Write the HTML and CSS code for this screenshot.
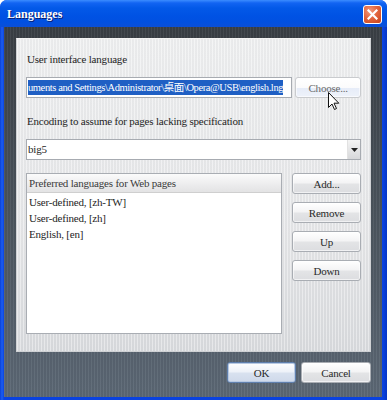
FILE: index.html
```html
<!DOCTYPE html>
<html lang="en">
<head>
    <meta charset="UTF-8">
    <title>Languages</title>
    <link rel="stylesheet" href="styles.css">
</head>
<body>
    <div class="window">
        <div class="titlebar">
            <span class="title">Languages</span>
            <span class="close">
                <svg width="11" height="11" viewBox="0 0 11 11">
                    <path d="M1.5 1.5 L9.5 9.5 M9.5 1.5 L1.5 9.5" stroke="#fff" stroke-width="2.2" stroke-linecap="square"/>
                </svg>
            </span>
        </div>
        <div class="frame">
            <div class="panel">
                <div class="label">User interface language</div>
                <div class="row">
                    <div class="path-input"><span class="selected">uments and Settings\Administrator\桌面\Opera@USB\english.lng</span></div>
                    <button class="btn choose">Choose...</button>
                </div>

                <div class="label second">Encoding to assume for pages lacking specification</div>
                <div class="select">
                    <span class="value">big5</span>
                    <span class="arrow">
                        <svg width="7" height="4" viewBox="0 0 7 4"><path d="M0 0 L7 0 L3.5 4 Z" fill="#222"/></svg>
                    </span>
                </div>

                <div class="list-row">
                    <div class="list">
                        <div class="list-head">Preferred languages for Web pages</div>
                        <div class="item">User-defined, [zh-TW]</div>
                        <div class="item">User-defined, [zh]</div>
                        <div class="item">English, [en]</div>
                    </div>
                    <div class="side-buttons">
                        <button class="btn">Add...</button>
                        <button class="btn">Remove</button>
                        <button class="btn">Up</button>
                        <button class="btn">Down</button>
                    </div>
                </div>
            </div>

            <div class="footer">
                <button class="btn ok">OK</button>
                <button class="btn cancel">Cancel</button>
            </div>
        </div>

        <!-- mouse pointer over the Choose button -->
        <svg class="cursor" width="12" height="19" viewBox="0 0 12 19">
            <path d="M0.5 0.5 L0.5 15.5 L4 12 L6.5 17.5 L8.5 16.5 L6 11.2 L10.8 11.2 Z" fill="#fff" stroke="#111" stroke-width="1"/>
        </svg>
    </div>
</body>
</html>
```

FILE: styles.css
```css
html, body {
    margin: 0;
    padding: 0;
    background: #fff;
}
body {
    width: 387px;
    height: 400px;
    overflow: hidden;
    font-family: "Liberation Serif", "Noto Sans CJK TC", serif;
    font-size: 11px;
    letter-spacing: -0.2px;
    color: #1e1e1e;
}
.window {
    position: relative;
    height: 400px;
    display: flex;
    flex-direction: column;
    background: linear-gradient(90deg, #0a3fd6 0, #1d5ff0 2px, #0a42e0 4px, #0a42e0 383px, #0636c4 387px);
    border-radius: 7px 7px 0 0;
}
.titlebar {
    height: 27px;
    display: flex;
    align-items: center;
    justify-content: space-between;
    padding: 0 5px 0 7px;
    border-radius: 7px 7px 0 0;
    background: linear-gradient(#3b8cff 0, #1264f2 3px, #0359e8 8px, #0052e4 16px, #0150e0 22px, #0a4fd8 27px);
}
.title {
    color: #fff;
    font-weight: bold;
    font-size: 12px;
    letter-spacing: 0;
    text-shadow: 1px 1px 0 #0a1c6e;
    margin-top: 2px;
}
.close {
    width: 19px;
    height: 19px;
    box-sizing: border-box;
    border: 1px solid #fff;
    border-radius: 3px;
    background: radial-gradient(circle at 35% 30%, #f39a7d 0, #e2663f 45%, #c8411a 100%);
    display: flex;
    align-items: center;
    justify-content: center;
    margin-top: 1px;
}
.frame {
    flex: 1;
    margin: 0 5px 3px 4px;
    padding: 11px 11px 0 12px;
    background:
        repeating-linear-gradient(90deg, rgba(255,255,255,0.05) 0 1px, rgba(0,0,0,0.04) 1px 3px),
        linear-gradient(#3a3f45, #4b545d 50%, #5c6875);
}
.panel {
    height: 314px;
    box-sizing: border-box;
    padding: 12px 9px 19px 9px;
    border: 1px solid #cfd1d4;
    border-top-color: #f4f4f4;
    background:
        repeating-linear-gradient(90deg, rgba(255,255,255,0.35) 0 1px, rgba(0,0,0,0.02) 1px 3px),
        linear-gradient(#eeeff0, #e6e7e9 60%, #d9dbde);
}
.label {
    height: 16px;
    line-height: 16px;
    padding-left: 1px;
    margin-bottom: 10px;
}
.label.second {
    margin-top: 15px;
}
.row {
    display: flex;
    gap: 3px;
    height: 21px;
}
.path-input {
    width: 268px;
    box-sizing: border-box;
    border: 1px solid #a7abb1;
    background: #fff;
    overflow: hidden;
    white-space: nowrap;
    padding: 2px 1px;
}
.selected {
    display: inline-block;
    height: 15px;
    line-height: 15px;
    background: #1f5fc4;
    color: #fff;
    font-size: 10.5px;
    letter-spacing: -0.4px;
}
.btn {
    font-family: "Liberation Serif", "Noto Sans CJK TC", serif;
    font-size: 11px;
    font-weight: normal;
    letter-spacing: -0.2px;
    color: #2a2a2a;
    height: 21px;
    padding: 0;
    border: 1px solid #a9adb3;
    border-radius: 3px;
    background: linear-gradient(#ffffff, #f4f4f5 45%, #e3e4e6 55%, #dcdde0);
    box-shadow: inset 0 0 0 1px rgba(255,255,255,0.6);
}
.choose {
    width: 66px;
    color: #6a6a6a;
    border-color: #c9cbce;
    background: linear-gradient(#ffffff, #fbfbfc 50%, #e6ecf8 52%, #eef2fa);
}
.select {
    margin-top: 10px;
    height: 21px;
    box-sizing: border-box;
    border: 1px solid #a7abb1;
    background: #fff;
    display: flex;
    justify-content: space-between;
}
.select .value {
    padding-left: 1px;
    line-height: 19px;
}
.select .arrow {
    width: 12px;
    display: flex;
    align-items: center;
    justify-content: center;
    background: linear-gradient(#f4f4f4, #d7d8da);
    border-left: 1px solid #e2e2e2;
}
.list-row {
    margin-top: 13px;
    display: flex;
    gap: 10px;
}
.list {
    width: 257px;
    height: 161px;
    box-sizing: border-box;
    border: 1px solid #a9adb3;
    background: #fff;
}
.list-head {
    height: 18px;
    line-height: 18px;
    padding-left: 2px;
    color: #3a3a3a;
    border-bottom: 1px solid #cfcfcf;
    background: linear-gradient(#fbfbfb, #ececed 60%, #e3e3e4);
}
.item {
    height: 16px;
    line-height: 16px;
    padding-left: 2px;
}
.list-head + .item {
    margin-top: 1px;
}
.side-buttons {
    display: flex;
    flex-direction: column;
    gap: 8px;
}
.side-buttons .btn {
    width: 69px;
}
.footer {
    display: flex;
    justify-content: flex-end;
    gap: 5px;
    margin-top: 10px;
}
.ok {
    width: 69px;
    border-color: #5f7fad;
    background: linear-gradient(#ffffff, #eef2f9 45%, #d8e1ef 55%, #cfd9ea);
    box-shadow: inset 0 0 0 1px #b8c9e2;
}
.cancel {
    width: 70px;
}
.cursor {
    position: absolute;
    left: 328px;
    top: 92px;
}
```
